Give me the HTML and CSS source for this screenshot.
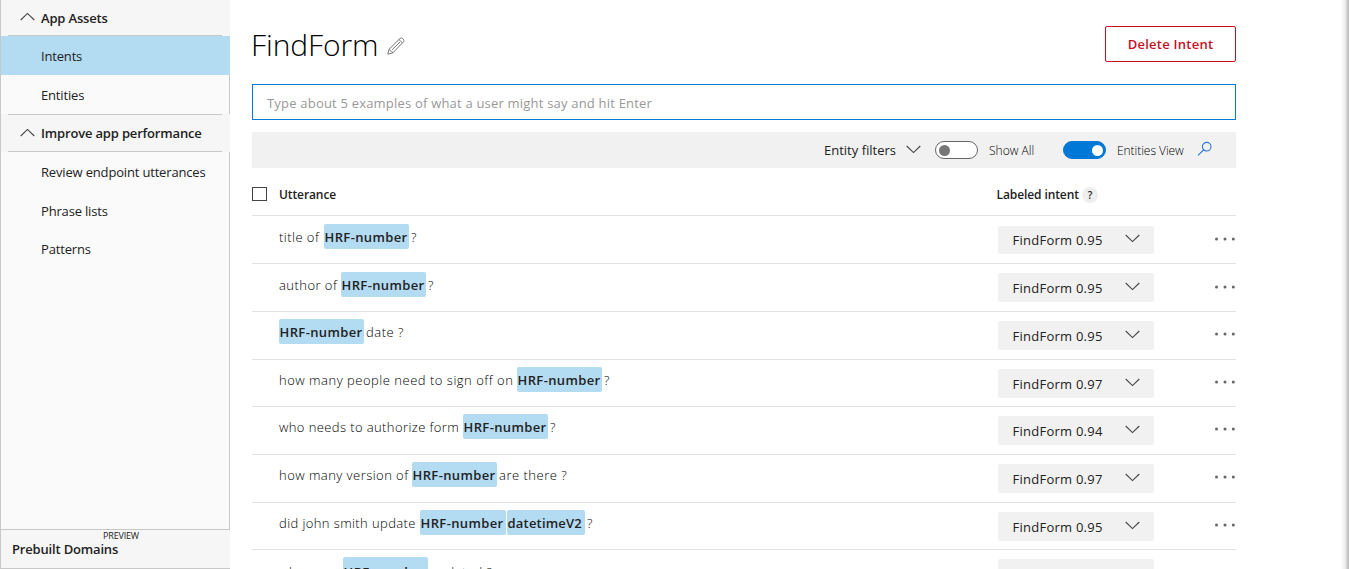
FILE: index.html
```html
<!DOCTYPE html>
<html lang="en">
<head>
<meta charset="utf-8">
<title>FindForm</title>
<link rel="stylesheet" href="styles.css">
</head>
<body>
<svg width="0" height="0" class="defs"><defs>
<symbol id="down" viewBox="0 0 15 9"><path d="M.7 1l6.8 6.6L14.3 1"/></symbol>
<symbol id="up" viewBox="0 0 15 9"><path d="M.7 8l6.8-6.6L14.3 8"/></symbol>
<symbol id="dots" viewBox="0 0 22 4"><circle cx="2.5" cy="2" r="1.5"/><circle cx="11" cy="2" r="1.5"/><circle cx="19.3" cy="2" r="1.5"/></symbol>
</defs></svg>
<div class="app">
<nav class="side">
  <div class="group first"><svg class="chev"><use href="#up"/></svg><span>App Assets</span></div>
  <a class="item active"><span>Intents</span></a>
  <a class="item"><span>Entities</span></a>
  <div class="group second"><svg class="chev"><use href="#up"/></svg><span>Improve app performance</span></div>
  <a class="item"><span>Review endpoint utterances</span></a>
  <a class="item"><span>Phrase lists</span></a>
  <a class="item last"><span>Patterns</span></a>
  <div class="filler"></div>
  <div class="prebuilt"><span class="preview">PREVIEW</span><span>Prebuilt Domains</span></div>
</nav>
<main class="main">
  <header class="head">
    <h1>FindForm</h1>
    <svg class="pencil" viewBox="0 0 18 18"><path d="M.8 17.200L2 12.300 13.200 1.300q1.200-.8 2.500.3l.6.6q1.200 1.300.3 2.500L5.800 15.900Z M2 12.300q.9.100 1.100 1.100.1.900 1.500 1 1 .3 1.200 1.500 M12 2.500l3.500 3.500 M13 5L5.200 12.700"/></svg>
    <button class="delete">Delete Intent</button>
  </header>
  <div class="entry"><span>Type about 5 examples of what a user might say and hit Enter</span></div>
  <div class="tools">
    <span class="filters">Entity filters</span><svg class="chev fchev"><use href="#down"/></svg>
    <span class="switch"></span><span class="showall">Show All</span>
    <span class="switch on"></span><span class="entview">Entities View</span>
    <svg class="search" viewBox="0 0 16 16"><circle cx="9.700" cy="5.700" r="4.300"/><path d="M6.500 9L1 14.300"/></svg>
  </div>
  <div class="thead"><span class="box"></span><span class="utt">Utterance</span><span class="lab">Labeled intent</span><span class="help">?</span></div>
  <div class="row top"><div class="u"><span class="w1">title of</span><b>HRF-number</b><span>?</span></div><div class="pill"><span>FindForm 0.95</span><svg class="chev"><use href="#down"/></svg></div><svg class="dots"><use href="#dots"/></svg></div>
  <div class="row top2"><div class="u"><span class="w2">author of</span><b>HRF-number</b><span>?</span></div><div class="pill"><span>FindForm 0.95</span><svg class="chev"><use href="#down"/></svg></div><svg class="dots"><use href="#dots"/></svg></div>
  <div class="row"><div class="u"><b>HRF-number</b><span>date ?</span></div><div class="pill"><span>FindForm 0.95</span><svg class="chev"><use href="#down"/></svg></div><svg class="dots"><use href="#dots"/></svg></div>
  <div class="row short"><div class="u"><span class="w4">how many people need to sign off on</span><b>HRF-number</b><span>?</span></div><div class="pill"><span>FindForm 0.97</span><svg class="chev"><use href="#down"/></svg></div><svg class="dots"><use href="#dots"/></svg></div>
  <div class="row"><div class="u"><span class="w5">who needs to authorize form</span><b>HRF-number</b><span>?</span></div><div class="pill"><span>FindForm 0.94</span><svg class="chev"><use href="#down"/></svg></div><svg class="dots"><use href="#dots"/></svg></div>
  <div class="row"><div class="u"><span class="w6">how many version of</span><b>HRF-number</b><span>are there ?</span></div><div class="pill"><span>FindForm 0.97</span><svg class="chev"><use href="#down"/></svg></div><svg class="dots"><use href="#dots"/></svg></div>
  <div class="row short"><div class="u"><span class="w7">did john smith update</span><b>HRF-number</b><b class="date">datetimeV2</b><span>?</span></div><div class="pill"><span>FindForm 0.95</span><svg class="chev"><use href="#down"/></svg></div><svg class="dots"><use href="#dots"/></svg></div>
  <div class="row end"><div class="u"><span class="w8">when was</span><b>HRF-number</b><span>updated ?</span></div><div class="pill"></div></div>
</main>
<div class="edge"></div>
</div>
</body>
</html>
```
FILE: styles.css
```css
*{box-sizing:border-box}
body{margin:0;background:#fff;color:#222;font-family:"Open Sans","Noto Sans",sans-serif;font-size:13px}
.defs{position:absolute}
.app{display:flex;height:569px;overflow:hidden}
svg{fill:none;stroke:#444;stroke-width:1.1;flex:none}
span,b,h1,button{white-space:nowrap}
.side{width:230px;height:569px;background:#fafafa;border-left:1px solid #c8c8c8;display:flex;flex-direction:column;flex:none;letter-spacing:-.17px}
.chev{width:15px;height:9px}
.group{display:flex;align-items:center;padding-left:19px;background:linear-gradient(#c8c8c8,#c8c8c8) 7px 100%/214px 1px no-repeat #f6f6f6;font-weight:600;flex:none}
.group .chev{margin:-2px 6px 0 0}
.first{height:36px;padding-bottom:1px}
.second{height:38px;background:linear-gradient(#c8c8c8,#c8c8c8) 7px 0/214px 1px no-repeat,linear-gradient(#c8c8c8,#c8c8c8) 7px 100%/214px 1px no-repeat,#f6f6f6}
.item{height:39px;padding-left:40px;display:flex;align-items:center;border-right:1px solid #c8c8c8;flex:none}
.item.active{background:#b3dbf2;border-color:#b3dbf2}
.item.last{padding-bottom:2px}
.filler{flex:1;border-right:1px solid #c8c8c8}
.prebuilt{height:40px;border-top:1px solid #c8c8c8;border-bottom:1px solid #c8c8c8;background:#f6f6f6;padding-left:11px;font-weight:600;display:flex;flex-direction:column;line-height:15px}
.preview{font-size:9px;font-weight:400;line-height:12px;margin-left:91px}
.main{width:984px;margin-left:22px;flex:none}
.head{height:84px;padding-top:26px;display:flex}
h1{margin:0 0 0 -1px;color:#000;font-weight:300;font-size:30px;line-height:38px;letter-spacing:-.1px}
.pencil{width:18px;height:18px;margin:11px 0 0 8.500px;stroke:#777;stroke-width:1}
.delete{margin-left:auto;width:131px;height:36px;border:1px solid #c50f1f;border-radius:2px;background:#fff;color:#c50f1f;font:600 13px "Open Sans",sans-serif;letter-spacing:.25px;padding:0}
.entry{height:36px;border:1px solid #0078d4;padding:2px 0 0 14px;display:flex;align-items:center;color:#999;letter-spacing:.2px}
.tools{height:36px;margin-top:12px;background:#f1f1f1;display:flex;align-items:center;padding-left:572px}
.filters{width:82px}
.fchev{margin-top:-2px}
.switch{width:43px;height:18px;border:1px solid #666;border-radius:9px;background:#fff;margin-left:14px;display:flex;align-items:center;padding-left:3px}
.switch:before{content:"";width:11px;height:11px;border-radius:50%;background:#767676}
.switch.on{background:#0078d7;border-color:#0078d7;padding-left:28px;margin-left:26px}
.switch.on:before{background:#fff}
.showall,.entview{color:#000;font-size:12px;font-weight:300;margin-left:11px;width:48px}
.entview{width:70px;letter-spacing:-.05px}
.search{width:16px;height:16px;stroke:#2b78d8;margin:-2px 0 0 10px}
.thead{height:48px;padding-top:6px;border-bottom:1px solid #e3e3e3;display:flex;align-items:center;font-weight:600;font-size:12px;letter-spacing:-.1px}
.box{width:15px;height:14px;border:1px solid #444;margin-top:-1px}
.utt{margin-left:12px;width:717.500px}
.lab{width:85.500px}
.help{width:16px;height:16px;border-radius:50%;background:#eee;text-align:center;font-size:10px;line-height:16px}
.row{height:48px;border-bottom:1px solid #e3e3e3;display:flex;align-items:flex-start}
.row.short{height:47px}
.u{margin-left:27px;width:719px;padding-top:7px;display:flex;align-items:flex-start;font-weight:300;color:#000;letter-spacing:.51px;line-height:27px}
.top .u,.top2 .u{padding-top:8px}
.u b{height:25px;width:85px;padding-left:.5px;background:#b3dbf2;border-radius:2px;font-weight:600;color:#222;letter-spacing:.38px;margin-right:2px}
.u b:has(+.date){width:86px;margin-right:1px}
.u .date{width:78px;letter-spacing:.2px}
.end .u{line-height:31px}
.w1{width:45px}.w2{width:62px}.w4{width:238px}.w5{width:184px;letter-spacing:.4px}.w6{width:133px}.w7{width:141px;letter-spacing:.4px}.w8{width:64px}
.w1,.w2,.w6{letter-spacing:.46px}
.pill{width:156px;height:29px;margin-top:9px;background:#f1f1f1;border-radius:2px;padding-left:14.500px;display:flex;align-items:center;letter-spacing:.25px}
.top .pill{height:28px;margin-top:10px}
.pill span{width:112.500px}
.pill .chev{margin-top:-3px}
.dots{width:22px;height:4px;margin:20px 0 0 60px;fill:#666;stroke:none}
.top .dots,.top2 .dots{margin-top:21px}
.edge{width:8px;margin-left:auto;background:linear-gradient(90deg,#fff,#eee 50%,#b5b5b5)}
```
